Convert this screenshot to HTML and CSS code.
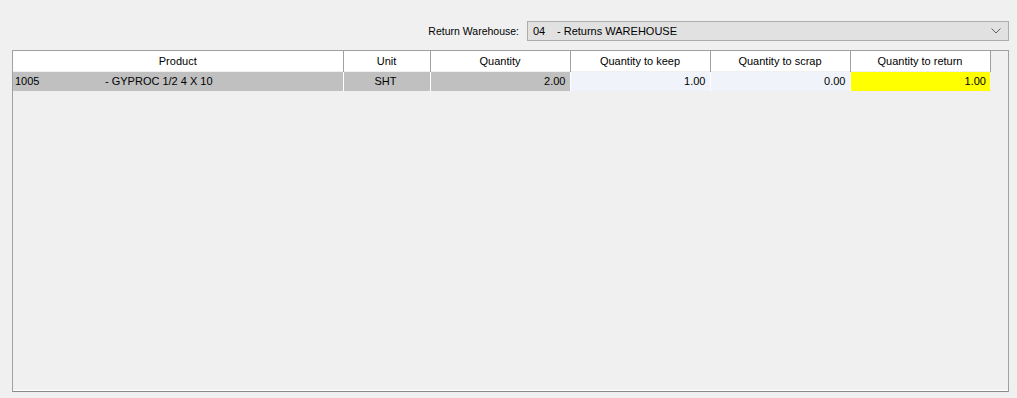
FILE: index.html
```html
<!DOCTYPE html>
<html lang="en">
<head>
    <meta charset="UTF-8">
    <title>Return Items</title>
    <link rel="stylesheet" href="styles.css">
</head>
<body>
    <div class="toolbar">
        <label class="wh-label" for="warehouse">Return Warehouse:</label>
        <div class="combo" id="warehouse">
            <span class="combo-text"><span class="code">04</span>- Returns WAREHOUSE</span>
            <svg class="chevron" width="10" height="6" viewBox="0 0 10 6">
                <path d="M0.5 0.5 L5 5 L9.5 0.5" fill="none" stroke="#606060" stroke-width="1"/>
            </svg>
        </div>
    </div>

    <div class="grid-box">
        <table class="grid">
            <thead>
                <tr>
                    <th class="c-product">Product</th>
                    <th class="c-unit">Unit</th>
                    <th class="c-qty">Quantity</th>
                    <th class="c-qty">Quantity to keep</th>
                    <th class="c-qty">Quantity to scrap</th>
                    <th class="c-qty">Quantity to return</th>
                </tr>
            </thead>
            <tbody>
                <tr>
                    <td class="ro left"><span class="sku">1005</span>- GYPROC 1/2 4 X 10</td>
                    <td class="ro center">SHT</td>
                    <td class="ro num">2.00</td>
                    <td class="edit num">1.00</td>
                    <td class="edit num">0.00</td>
                    <td class="hl num">1.00</td>
                </tr>
            </tbody>
        </table>
    </div>
</body>
</html>
```

FILE: styles.css
```css
/* Fond général façon fenêtre Windows */
body {
  margin: 0;
  background-color: #f0f0f0;
  font-family: "Liberation Sans", Arial, sans-serif;
  font-size: 11px;
  color: #000;
}

/* Barre du haut avec l'entrepôt */
.toolbar {
  display: flex;
  justify-content: flex-end;
  align-items: center;
  padding: 21px 8px 0 0;
}

.wh-label {
  margin-right: 8px;
  font-size: 10.5px;
}

.combo {
  width: 468px;
  height: 18px;
  border: 1px solid #adadad;
  background-color: #e1e1e1;
  display: flex;
  align-items: center;
  justify-content: space-between;
  padding: 0 7px 0 5px;
  box-sizing: content-box;
}

.combo-text {
  white-space: pre;
}

.code {
  display: inline-block;
  width: 24px;
}

/* Cadre de la grille */
.grid-box {
  margin: 9px 8px 0 12px;
  height: 340px;
  border: 1px solid #a0a0a0;
  border-bottom-color: #8a8a8a;
  box-shadow: inset 0 -1px 0 #fff;
  background-color: #f0f0f0;
}

.grid {
  border-collapse: collapse;
  table-layout: fixed;
  width: 977px;
}

.grid th {
  height: 20px;
  padding: 0;
  background-color: #fff;
  font-weight: normal;
  text-align: center;
  border-right: 1px solid #a0a0a0;
  box-sizing: border-box;
}

.c-product {
  width: 330px;
}

.c-unit {
  width: 87px;
}

.c-qty {
  width: 140px;
}

.grid td {
  height: 19px;
  padding: 0 4px 0 2px;
  border-right: 1px solid #fff;
  border-top: 1px solid #f0f0f0;
  white-space: pre;
}

.grid td:last-child {
  border-right: none;
}

.ro {
  background-color: #c0c0c0;
}

.edit {
  background-color: #f0f4fa;
}

.hl {
  background-color: #ffff00;
}

.num {
  text-align: right;
}

.center {
  text-align: center;
}

.sku {
  display: inline-block;
  width: 90px;
}
```
